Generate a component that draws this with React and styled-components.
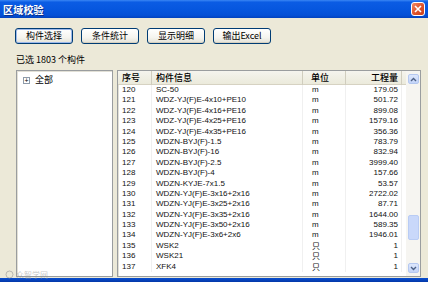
import React from 'react'
import styled, { createGlobalStyle } from 'styled-components'

const GlobalStyle = createGlobalStyle`
  html, body {
    margin: 0;
    padding: 0;
    width: 428px;
    height: 282px;
    overflow: hidden;
    background: #ECE9D8;
  }
  * { box-sizing: border-box; }
`

const CJK = `"Noto Sans CJK SC", "Liberation Sans", sans-serif`
const LATIN = `"Liberation Sans", "Noto Sans CJK SC", sans-serif`

const Window = styled.div`
  width: 428px;
  height: 282px;
  display: flex;
  flex-direction: column;
  background: #ECE9D8;
  position: relative;
  font-family: ${CJK};
  color: #000;
`

const TitleBar = styled.div`
  height: 18px;
  flex: none;
  display: flex;
  align-items: center;
  justify-content: space-between;
  padding: 0 3px 0 3px;
  background: linear-gradient(to bottom, #3A86F4 0%, #0B5CE4 12%, #0656DE 55%, #0450D6 85%, #0242BE 100%);
`

const Title = styled.div`
  color: #fff;
  font-size: 10px;
  font-weight: bold;
  letter-spacing: 0.2px;
  text-shadow: 1px 1px 0 #0A2F8A;
`

const CloseButton = styled.div`
  width: 14px;
  height: 14px;
  border: 1px solid #fff;
  border-radius: 3px;
  background: linear-gradient(135deg, #F08A66 0%, #E0552E 50%, #C8401C 100%);
  display: flex;
  align-items: center;
  justify-content: center;
`

const Body = styled.div`
  flex: 1;
  display: flex;
  flex-direction: column;
  padding: 10px 0 0 15px;
`

const Toolbar = styled.div`
  display: flex;
  gap: 8px;
`

const Button = styled.div`
  width: 58px;
  height: 16px;
  border: 1px solid #003C74;
  border-radius: 3px;
  background: linear-gradient(to bottom, #FFFFFF 0%, #F5F4EF 60%, #E3E1D6 100%);
  box-shadow: ${p => p.$default ? 'inset 0 0 0 1px #9DB9EB' : 'inset 0 -1px 0 #D6D0C0'};
  font-size: 9px;
  line-height: 14px;
  text-align: center;
  font-family: ${CJK};
`

const Count = styled.div`
  margin-top: 10px;
  padding-left: 1px;
  font-size: 9px;
  line-height: 12px;
  height: 12px;
`

const Panels = styled.div`
  margin-top: 4px;
  margin-left: 1px;
  display: flex;
  gap: 4px;
  height: 207px;
`

const TreePanel = styled.div`
  width: 97px;
  background: #fff;
  border: 1px solid #9A9D9F;
  box-shadow: inset 1px 1px 0 #E2E0D6;
  padding: 3px 0 0 6px;
`

const TreeItem = styled.div`
  display: flex;
  align-items: center;
  gap: 5px;
  font-size: 9px;
  line-height: 12px;
`

const Expander = styled.div`
  width: 7px;
  height: 7px;
  border: 1px solid #8D9AA9;
  background: #fff;
  display: flex;
  align-items: center;
  justify-content: center;
  font-size: 7px;
  line-height: 5px;
  font-family: ${LATIN};
  color: #000;
`

const TablePanel = styled.div`
  width: 304px;
  background: #fff;
  border: 1px solid #9A9D9F;
  box-shadow: inset 1px 1px 0 #E2E0D6;
  display: flex;
`

const Grid = styled.div`
  flex: 1;
  display: flex;
  flex-direction: column;
`

const cols = '34px 151px 43px 56px 1fr'

const HeaderRow = styled.div`
  display: grid;
  grid-template-columns: ${cols};
  height: 14px;
  background: linear-gradient(to bottom, #F5F4EE 0%, #EBEADB 100%);
  border-bottom: 1px solid #D6D2C2;
`

const HeaderCell = styled.div`
  font-size: 9px;
  line-height: 14px;
  font-weight: 500;
  border-right: 1px solid #D0CDBE;
  padding: ${p => p.$pad || '0 0 0 4px'};
  text-align: ${p => p.$right ? 'right' : 'left'};
  white-space: nowrap;
`

const Row = styled.div`
  display: grid;
  grid-template-columns: ${cols};
  height: 10.4px;
`

const Cell = styled.div`
  font-family: ${p => p.$cjk ? CJK : LATIN};
  font-size: 8px;
  line-height: ${p => p.$cjk ? '10px' : '10.4px'};
  height: 10.4px;
  border-right: 1px solid #F0F0F0;
  padding: ${p => p.$pad || '0 0 0 4px'};
  text-align: ${p => p.$right ? 'right' : 'left'};
  white-space: nowrap;
  overflow: hidden;
  color: #111;
`

const Scrollbar = styled.div`
  width: 14px;
  flex: none;
  background: #F6F5F1;
  display: flex;
  flex-direction: column;
  align-items: center;
  padding: 3px 0 3px 0;
`

const Arrow = styled.div`
  width: 11px;
  height: 10px;
  border-radius: 2px;
  background: linear-gradient(to bottom, #DDE7FC 0%, #C3D4F9 100%);
  border: 1px solid #B5C8F0;
  display: flex;
  align-items: center;
  justify-content: center;
`

const Thumb = styled.div`
  width: 11px;
  height: 25px;
  margin-top: 131px;
  border-radius: 2px;
  background: #C9D8FA;
  border: 1px solid #B9CCF4;
`

const Spacer = styled.div`
  flex: 1;
`

const BottomFrame = styled.div`
  height: 4px;
  flex: none;
  background: linear-gradient(to bottom, #0A4FD0, #0338A8);
`

const Watermark = styled.div`
  position: absolute;
  left: 5px;
  bottom: 2px;
  display: flex;
  align-items: center;
  gap: 2px;
  font-size: 8px;
  color: rgba(150, 150, 150, 0.55);
`

const rows = [
  ['120', 'SC-50', 'm', '179.05'],
  ['121', 'WDZ-YJ(F)E-4x10+PE10', 'm', '501.72'],
  ['122', 'WDZ-YJ(F)E-4x16+PE16', 'm', '899.08'],
  ['123', 'WDZ-YJ(F)E-4x25+PE16', 'm', '1579.16'],
  ['124', 'WDZ-YJ(F)E-4x35+PE16', 'm', '356.36'],
  ['125', 'WDZN-BYJ(F)-1.5', 'm', '783.79'],
  ['126', 'WDZN-BYJ(F)-16', 'm', '832.94'],
  ['127', 'WDZN-BYJ(F)-2.5', 'm', '3999.40'],
  ['128', 'WDZN-BYJ(F)-4', 'm', '157.66'],
  ['129', 'WDZN-KYJE-7x1.5', 'm', '53.57'],
  ['130', 'WDZN-YJ(F)E-3x16+2x16', 'm', '2722.02'],
  ['131', 'WDZN-YJ(F)E-3x25+2x16', 'm', '87.71'],
  ['132', 'WDZN-YJ(F)E-3x35+2x16', 'm', '1644.00'],
  ['133', 'WDZN-YJ(F)E-3x50+2x16', 'm', '589.35'],
  ['134', 'WDZN-YJ(F)E-3x6+2x6', 'm', '1946.01'],
  ['135', 'WSK2', '只', '1'],
  ['136', 'WSK21', '只', '1'],
  ['137', 'XFK4', '只', '1'],
]

const Chevron = ({ up }) => (
  <svg width="7" height="5" viewBox="0 0 7 5">
    <path d={up ? 'M1 4 L3.5 1.5 L6 4' : 'M1 1 L3.5 3.5 L6 1'} fill="none" stroke="#4D6185" strokeWidth="1.4" />
  </svg>
)

const App = () => {
  return (
    <Window>
      <GlobalStyle />
      <TitleBar>
        <Title>区域校验</Title>
        <CloseButton>
          <svg width="8" height="8" viewBox="0 0 8 8">
            <path d="M1 1 L7 7 M7 1 L1 7" stroke="#fff" strokeWidth="1.6" />
          </svg>
        </CloseButton>
      </TitleBar>
      <Body>
        <Toolbar>
          <Button $default>构件选择</Button>
          <Button>条件统计</Button>
          <Button>显示明细</Button>
          <Button>输出Excel</Button>
        </Toolbar>
        <Count>已选 1803 个构件</Count>
        <Panels>
          <TreePanel>
            <TreeItem>
              <Expander>+</Expander>
              全部
            </TreeItem>
          </TreePanel>
          <TablePanel>
            <Grid>
              <HeaderRow>
                <HeaderCell>序号</HeaderCell>
                <HeaderCell>构件信息</HeaderCell>
                <HeaderCell $pad="0 0 0 8px">单位</HeaderCell>
                <HeaderCell $right $pad="0 3px 0 0">工程量</HeaderCell>
                <HeaderCell style={{ borderRight: 'none' }} />
              </HeaderRow>
              {rows.map(r => (
                <Row key={r[0]}>
                  <Cell>{r[0]}</Cell>
                  <Cell>{r[1]}</Cell>
                  <Cell $cjk={r[2] !== 'm'} $pad="0 0 0 9px">{r[2]}</Cell>
                  <Cell $right $pad="0 3px 0 0">{r[3]}</Cell>
                  <Cell style={{ borderRight: 'none' }} />
                </Row>
              ))}
            </Grid>
            <Scrollbar>
              <Arrow><Chevron up /></Arrow>
              <Thumb />
              <Spacer />
              <Arrow><Chevron /></Arrow>
            </Scrollbar>
          </TablePanel>
        </Panels>
      </Body>
      <BottomFrame />
      <Watermark>
        <svg width="9" height="9" viewBox="0 0 9 9">
          <circle cx="4.5" cy="4.5" r="3.5" fill="none" stroke="rgba(150,150,150,0.6)" />
        </svg>
        众智学网
      </Watermark>
    </Window>
  )
}

export default App
